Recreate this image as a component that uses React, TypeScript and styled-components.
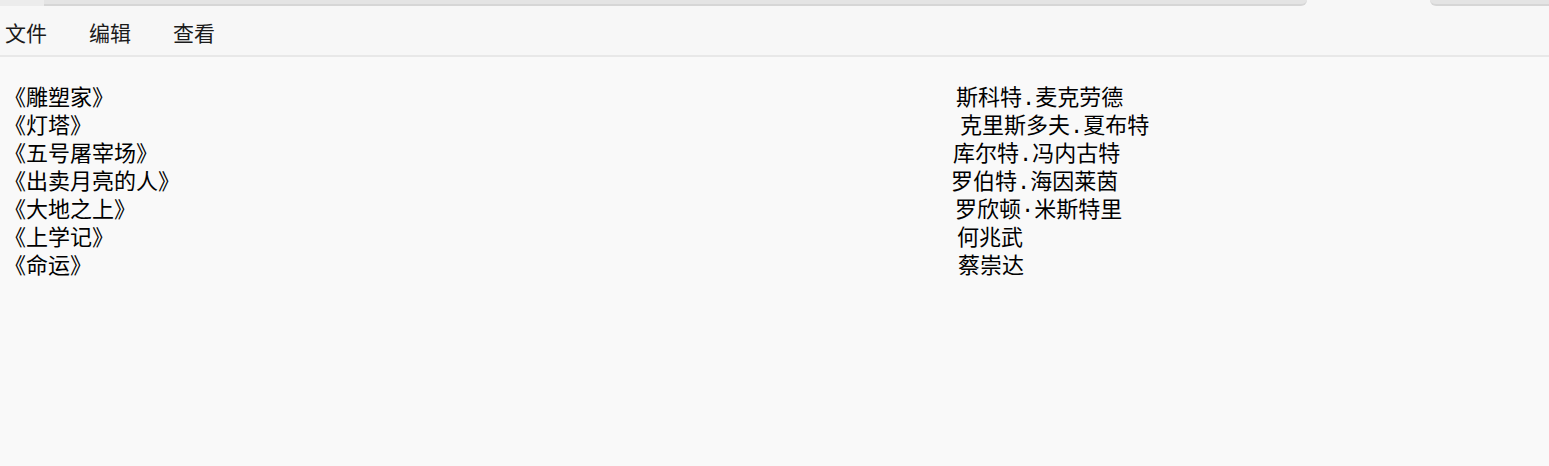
import styled, { createGlobalStyle } from "styled-components";

const GlobalStyle = createGlobalStyle`
  html, body {
    margin: 0;
    padding: 0;
    background: #f9f9f9;
  }
  body {
    font-family: "Noto Sans CJK SC", "Noto Sans", sans-serif;
  }
`;

const Window = styled.div`
  width: 1549px;
  height: 466px;
  display: flex;
  flex-direction: column;
  background: #f9f9f9;
  overflow: hidden;
`;

const TabStrip = styled.div`
  height: 6px;
  display: flex;
  background: #f7f7f7;
`;

const TabEdge = styled.div<{ $width?: number; $left?: boolean; $right?: boolean; $line?: boolean }>`
  ${p => (p.$width ? `width: ${p.$width}px;` : "flex: 1;")}
  background: ${p => (p.$line ? "#e4e4e4" : "#ececec")};
  border-bottom: ${p => (p.$line ? "2px solid #d6d6d6" : "none")};
  border-bottom-left-radius: ${p => (p.$left ? "6px" : "0")};
  border-bottom-right-radius: ${p => (p.$right ? "6px" : "0")};
`;

const Gap = styled.div`
  width: 123px;
`;

const MenuBar = styled.div`
  height: 49px;
  display: flex;
  align-items: center;
  gap: 42px;
  padding-left: 5px;
  background: #f7f7f7;
  border-bottom: 2px solid #e8e8e8;
`;

const MenuItem = styled.span`
  font-size: 21px;
  color: #1b1b1b;
  padding-top: 3px;
`;

const Editor = styled.div`
  flex: 1;
  padding: 24px 0 0 4px;
`;

const Line = styled.div`
  display: flex;
  align-items: baseline;
  height: 28px;
  line-height: 28px;
  font-size: 22px;
  color: #000;
  white-space: pre;
`;

const Title = styled.span`
  width: 947px;
`;

const Author = styled.span<{ $offset: number }>`
  padding-left: ${p => p.$offset}px;
  font-family: "Liberation Mono", "Noto Sans CJK SC", monospace;
`;

const books = [
  { title: "《雕塑家》", author: "斯科特.麦克劳德", offset: 5 },
  { title: "《灯塔》", author: "克里斯多夫.夏布特", offset: 9 },
  { title: "《五号屠宰场》", author: "库尔特.冯内古特", offset: 2 },
  { title: "《出卖月亮的人》", author: "罗伯特.海因莱茵", offset: 0 },
  { title: "《大地之上》", author: "罗欣顿·米斯特里", offset: 4 },
  { title: "《上学记》", author: "何兆武", offset: 6 },
  { title: "《命运》", author: "蔡崇达", offset: 7 },
];

const App = () => {
  return (
    <Window>
      <GlobalStyle />
      <TabStrip>
        <TabEdge $width={44} />
        <TabEdge $line $right />
        <Gap />
        <TabEdge $width={119} $line $left />
      </TabStrip>
      <MenuBar>
        <MenuItem>文件</MenuItem>
        <MenuItem>编辑</MenuItem>
        <MenuItem>查看</MenuItem>
      </MenuBar>
      <Editor>
        {books.map(b => (
          <Line key={b.title}>
            <Title>{b.title}</Title>
            <Author $offset={b.offset}>{b.author}</Author>
          </Line>
        ))}
      </Editor>
    </Window>
  );
};

export default App;
